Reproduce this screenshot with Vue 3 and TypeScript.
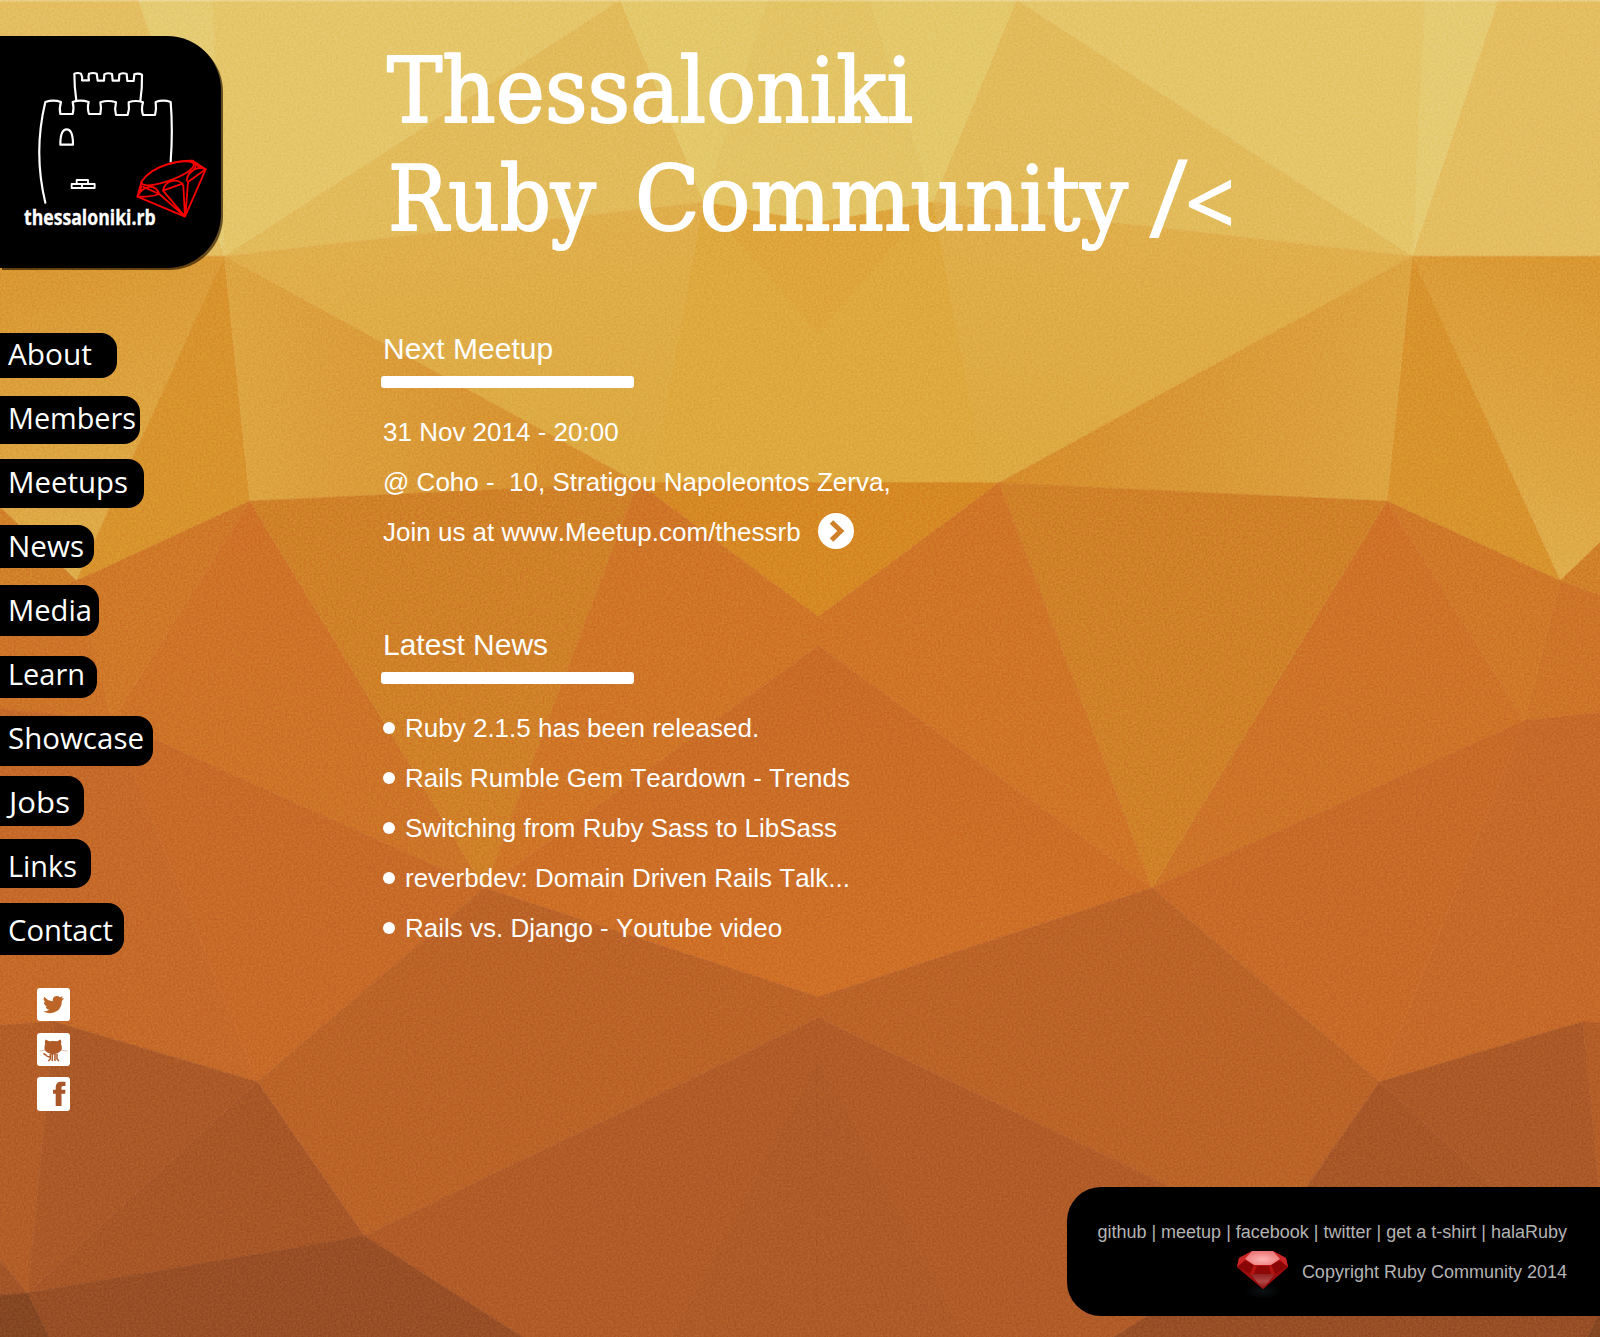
<script setup lang="ts">
interface NavItem {
  label: string
  width: number
  height: number
  gap: number
  textX: number
  textWidth: number
  baseline: number
}

interface Facet {
  points: string
  fill: string
}

interface Shade {
  id: string
  x2: number
  y2: number
  from: string
  to: string
}

const navItems: NavItem[] = [
  { label: 'About', width: 116.5, height: 45, gap: 0, textX: 8, textWidth: 84, baseline: 32 },
  { label: 'Members', width: 140, height: 48, gap: 18, textX: 8, textWidth: 128, baseline: 33 },
  { label: 'Meetups', width: 143.5, height: 49, gap: 15, textX: 8, textWidth: 120, baseline: 34 },
  { label: 'News', width: 94, height: 43, gap: 17, textX: 8, textWidth: 76, baseline: 32 },
  { label: 'Media', width: 98.5, height: 51, gap: 17, textX: 8, textWidth: 84, baseline: 36 },
  { label: 'Learn', width: 97, height: 42, gap: 20, textX: 8, textWidth: 77, baseline: 29 },
  { label: 'Showcase', width: 152.5, height: 50, gap: 18, textX: 8, textWidth: 136, baseline: 33 },
  { label: 'Jobs', width: 83.5, height: 50, gap: 10, textX: 9, textWidth: 61, baseline: 37 },
  { label: 'Links', width: 91, height: 49, gap: 13, textX: 8, textWidth: 69, baseline: 38 },
  { label: 'Contact', width: 124, height: 52, gap: 15, textX: 8, textWidth: 105, baseline: 38 },
]

const news: string[] = [
  'Ruby 2.1.5 has been released.',
  'Rails Rumble Gem Teardown - Trends',
  'Switching from Ruby Sass to LibSass',
  'reverbdev: Domain Driven Rails Talk...',
  'Rails vs. Django - Youtube video',
]

const shades: Shade[] = [
  { id: 'edge', x2: 0.3, y2: 1, from: '#d9952f', to: '#dfac4a' },
  { id: 'wedge', x2: 1, y2: 0, from: '#dda541', to: '#d68c2a' },
  { id: 'drop', x2: 0.3, y2: 1, from: '#e1b04f', to: '#dda940' },
  { id: 'ember', x2: 0, y2: 1, from: '#cf7227', to: '#cc7428' },
  { id: 'rust', x2: 0, y2: 1, from: '#c86b27', to: '#cf7027' },
]

// Facets of the left half; the right half is the same set flipped about x = 802.
const facets: Facet[] = [
  { points: '-40,0 136,0 220,251 -40,251', fill: '#e4be60' },
  { points: '136,0 208,0 220,251', fill: '#e5cb72' },
  { points: '208,0 608,0 220,251', fill: '#e5c669' },
  { points: '608,0 690,198 220,251', fill: '#e2bb5a' },
  { points: '608,0 752,0 690,198', fill: '#e4c86a' },
  { points: '752,0 803,0 803,218 690,198', fill: '#e3c464' },
  { points: '-40,251 220,251 75,569 -40,458', fill: 'url(#edge)' },
  { points: '220,251 245,491 75,569', fill: '#d8932d' },
  { points: '220,251 690,198 803,327 803,473 625,473', fill: 'url(#drop)' },
  { points: '690,198 803,327 803,473 640,473', fill: '#dea93f' },
  { points: '690,198 803,218 803,327', fill: '#dea53b' },
  { points: '220,251 625,473 245,491', fill: 'url(#wedge)' },
  { points: '625,473 803,473 803,605', fill: '#d68824' },
  { points: '-40,458 75,569 -40,610', fill: '#d18029' },
  { points: '-40,610 75,569 110,706 -40,690', fill: '#cd7428' },
  { points: '75,569 245,491 110,706', fill: '#cf7828' },
  { points: '245,491 110,706 475,870', fill: 'url(#ember)' },
  { points: '245,491 625,473 475,870', fill: '#d08028' },
  { points: '625,473 803,605 803,632 475,870', fill: '#cf7527' },
  { points: '803,632 803,977 475,870', fill: 'url(#rust)' },
  { points: '-40,690 110,706 252,1060 53,1001 -40,1007', fill: '#c56929' },
  { points: '110,706 475,870 252,1060', fill: '#c76a28' },
  { points: '475,870 803,977 803,997 357,1211 252,1060', fill: '#bb6328' },
  { points: '803,997 803,1310 512,1310 357,1211', fill: '#b15b28' },
  { points: '803,1040 803,1310 660,1310', fill: '#ae5a28' },
  { points: '-40,1007 53,1001 27,1267 -40,1187', fill: '#b35d28' },
  { points: '53,1001 252,1060 27,1267', fill: '#ab5927' },
  { points: '252,1060 357,1211 27,1267', fill: '#a75627' },
  { points: '-40,1187 27,1267 -40,1272', fill: '#a45528' },
  { points: '27,1267 357,1211 512,1310 48,1310', fill: '#984e25' },
  { points: '-40,1272 27,1267 48,1310 -40,1310', fill: '#854622' },
]
</script>

<template>
  <div class="page">
    <svg class="backdrop" viewBox="0 0 1568 1310" preserveAspectRatio="none" aria-hidden="true">
      <defs>
        <filter id="grain" x="0" y="0" width="100%" height="100%" color-interpolation-filters="sRGB">
          <feTurbulence type="fractalNoise" baseFrequency="0.5" numOctaves="2" seed="4" />
          <feColorMatrix values="1.8 0 0 0 -0.4  1.8 0 0 0 -0.4  1.8 0 0 0 -0.4  0 0 0 0 1" />
        </filter>
        <linearGradient v-for="s in shades" :id="s.id" :key="s.id" x1="0" y1="0" :x2="s.x2" :y2="s.y2">
          <stop offset="0" :stop-color="s.from" />
          <stop offset="1" :stop-color="s.to" />
        </linearGradient>
        <g id="half">
          <polygon
            v-for="(facet, i) in facets"
            :key="i"
            :points="facet.points"
            :fill="facet.fill"
            :stroke="facet.fill"
            stroke-width="0.6"
          />
        </g>
      </defs>
      <use href="#half" />
      <use href="#half" transform="translate(1604 0) scale(-1 1)" />
      <rect class="grain" width="1568" height="1310" filter="url(#grain)" />
      <rect width="1568" height="1.5" fill="#fff" opacity="0.25" />
    </svg>

    <div class="body">
      <aside class="sidebar">
        <a class="logo">
          <svg width="221" height="232" viewBox="0 48 663 696">
            <g fill="none" stroke="#fff" stroke-width="6.500" stroke-linecap="round" stroke-linejoin="round">
              <path d="M136 548C110 440 112 345 136 246Q160 238 183 246Q177 265 181 282H218Q223 265 218 246Q241 238 266 246Q261 265 267 282H301Q305 265 301 247Q325 239 348 247Q343 266 348 285H383Q389 266 386 247Q407 239 429 247Q423 266 429 285H465Q470 266 467 246Q490 238 512 246Q519 330 512 424" />
              <path d="M229 242Q223 200 223 161Q233 157 243 161Q249 172 246 181H267Q264 170 267 161Q280 157 290 161L293 182H312L313 163Q324 157 336 162L338 182H357L358 163Q369 157 380 162L382 183H401L403 163Q415 158 426 164Q427 202 421 243" />
              <path d="M181 374Q181 328 200 328Q219 328 219 374Z" />
              <path d="M215 492H284V504H215ZM230 480H264V492H230ZM246 492V504" stroke-width="5.500" />
            </g>
            <g fill="none" stroke="#f60000" stroke-width="5.500" stroke-linejoin="round">
              <path d="M412 530L425 484Q450 448 505 432Q550 420 578 422L617 448L555 590Z" />
              <path d="M425 484C420 500 450 499 492 487C550 469 590 443 580 430C574 420 535 423 505 432" />
              <path d="M578 422L586 434L617 448M586 434Q590 444 570 460M425 496L418 522M412 530C430 494 466 490 478 522M412 530Q450 532 478 522L555 590M428 500L478 522M555 590L489 512C495 476 540 474 550 497L555 590M489 512L550 490M560 484C562 444 602 440 617 448L564 486L557 580" />
            </g>
            <text class="logo-name" x="72" y="616" textLength="395" lengthAdjust="spacingAndGlyphs">thessaloniki.rb</text>
          </svg>
        </a>

        <nav class="menu">
          <a
            v-for="item in navItems"
            :key="item.label"
            class="pill"
            :style="{ width: item.width + 'px', height: item.height + 'px', marginTop: item.gap + 'px' }"
          >
            <svg :width="item.width" :height="item.height">
              <text :x="item.textX" :y="item.baseline" :textLength="item.textWidth" lengthAdjust="spacingAndGlyphs">{{ item.label }}</text>
            </svg>
          </a>
        </nav>

        <div class="social">
          <a>
            <svg width="33" height="33" viewBox="0 0 33 33">
              <path fill="#bd6528" d="M27 10.2Q26 12 24.800 13Q25 19 20.500 22.800Q14 27.300 6.300 23.500Q10 23.600 12.200 21.700Q9.300 21.200 8.500 18.700H10.200Q6.800 17 6.900 13.900L8.600 14.400Q5.600 11.700 7.200 8.700Q10.800 12.900 15.700 13.200Q15.300 8.600 19.600 8Q21.500 7.900 23 9.200L25.800 8.200L24.700 10.500Z" />
            </svg>
          </a>
          <a>
            <svg width="33" height="33" viewBox="0 0 33 33">
              <path fill="#b05a27" d="M8.500 6.500L12.300 8.300Q16 7.500 20 8.300L23.700 6.500Q24.800 9 24 11Q26.500 16 22.500 19Q20.800 20.300 18.700 20.500V21.500H13.300V20.500Q11.200 20.300 9.600 19Q6 16 8.200 11Q7.400 9 8.500 6.500Z" />
              <path fill="none" stroke="#b05a27" stroke-width="1.500" d="M13.300 21V26L11.300 28M15.300 21V28M18 21V28M20 20.500V26L22 28M13 23.500Q10 24.200 9 22L6.500 20.500" />
              <path stroke="#dcb498" stroke-width="0.800" d="M2.500 18L8 17.300M24.500 17.300L30.500 18" />
            </svg>
          </a>
          <a>
            <svg width="33" height="34" viewBox="0 0 33 34">
              <path fill="#a95728" d="M18.700 29V16.700H16V12.700H18.700V10.500Q18.700 4.800 24 4.800H28.500V9H25.800Q24.500 9 24.500 10.500V12.700H28.500L28.200 16.700H24.500V29Z" />
            </svg>
          </a>
        </div>
      </aside>

      <main class="content">
        <h1 class="title">
          <svg width="860" height="220">
            <text x="5" y="86" textLength="526" lengthAdjust="spacingAndGlyphs">Thessaloniki</text>
            <text x="6" y="194" textLength="208" lengthAdjust="spacingAndGlyphs">Ruby</text>
            <text x="253" y="194" textLength="493" lengthAdjust="spacingAndGlyphs">Community</text>
            <text class="slash" x="766" y="202">/</text>
            <text class="angle" x="803" y="200" textLength="50" lengthAdjust="spacingAndGlyphs">&lt;</text>
          </svg>
        </h1>

        <section class="block">
          <h2>Next Meetup</h2>
          <div class="rule"></div>
          <p>31 Nov 2014 - 20:00</p>
          <p>@ Coho -&nbsp; 10, Stratigou Napoleontos Zerva,</p>
          <p class="join">
            <span>Join us at www.Meetup.com/thessrb</span>
            <svg width="36" height="36" viewBox="0 0 36 36">
              <circle cx="18" cy="18" r="18" fill="#fff" />
              <path d="M13.500 9L22.800 18L13.500 27" fill="none" stroke="#cf7f28" stroke-width="5" />
            </svg>
          </p>
        </section>

        <section class="block latest">
          <h2>Latest News</h2>
          <div class="rule"></div>
          <ul>
            <li v-for="entry in news" :key="entry">{{ entry }}</li>
          </ul>
        </section>
      </main>
    </div>

    <footer class="footer">
      <div class="links">github | meetup | facebook | twitter | get a t-shirt | halaRuby</div>
      <div class="legal">
        <svg width="51" height="48" viewBox="0 0 51 48">
          <defs>
            <radialGradient id="table" cx="0.5" cy="0.6" r="0.6">
              <stop offset="0" stop-color="#ffb5b5" />
              <stop offset="1" stop-color="#ea7474" />
            </radialGradient>
            <linearGradient id="pavilion" x1="0" y1="0" x2="0" y2="1">
              <stop offset="0" stop-color="#8e2020" />
              <stop offset="0.500" stop-color="#b04646" />
              <stop offset="1" stop-color="#8c0c0c" />
            </linearGradient>
            <radialGradient id="glow">
              <stop offset="0" stop-color="#0d1214" />
              <stop offset="1" stop-color="#000" />
            </radialGradient>
          </defs>
          <ellipse cx="26" cy="40" rx="18" ry="8" fill="url(#glow)" />
          <path fill="#a80a0a" d="M15 0H36L49 7L51 16L26 38L0 16L2 7Z" />
          <path fill="#c92626" d="M2 7L15 0L8 9L0 16ZM49 7L36 0L43 9L51 16Z" />
          <path fill="#8a0606" d="M8 10L0 16L13 23L17 14ZM43 10L51 16L38 23L34 14Z" />
          <path fill="#b51212" d="M17 14H34L38 23H13Z" />
          <path fill="#8f0808" d="M20 15H32L34 23H17Z" />
          <path fill="url(#pavilion)" d="M13 23H38L26 38Z" />
          <path fill="#9c0d0d" d="M0 16L13 23L26 38ZM51 16L38 23L26 38Z" />
          <path fill="url(#table)" d="M15 0H36L43 8L34 14H17L8 8Z" />
        </svg>
        <span>Copyright Ruby Community 2014</span>
      </div>
    </footer>
  </div>
</template>

<style>
body {
  margin: 0;
}
</style>

<style scoped>
.page {
  position: relative;
  isolation: isolate;
  display: flex;
  flex-direction: column;
  width: 1600px;
  height: 1337px;
  overflow: hidden;
  color: #fff;
  font-family: "Liberation Sans", Arial, sans-serif;
  font-kerning: none;
}

.backdrop {
  position: absolute;
  inset: 0;
  z-index: -1;
  width: 100%;
  height: 100%;
  isolation: isolate;
}

.grain {
  opacity: 0.1;
  mix-blend-mode: overlay;
}

.body {
  display: flex;
  align-items: flex-start;
}

.sidebar {
  display: flex;
  flex-direction: column;
  align-items: flex-start;
  width: 382px;
  padding-top: 36px;
}

.logo {
  display: flex;
  width: 221px;
  height: 232px;
  border-radius: 0 54px 54px 0;
  background: #000;
  box-shadow: 2px 2px 0 rgba(50, 28, 0, 0.7);
}

.logo-name {
  fill: #fff;
  stroke: #fff;
  stroke-width: 1px;
  font: 700 64px "Open Sans", "Noto Sans", sans-serif;
}

.menu {
  display: flex;
  flex-direction: column;
  align-items: flex-start;
  margin-top: 65px;
}

.pill {
  display: flex;
  border-radius: 0 16px 16px 0;
  background: #000;
}

.pill svg {
  overflow: visible;
}

.pill text {
  fill: #fff;
  font: 400 29px "Open Sans", "Noto Sans", sans-serif;
}

.social {
  display: flex;
  flex-direction: column;
  gap: 12px;
  margin: 33px 0 0 37px;
}

.social a {
  display: flex;
  border-radius: 3px;
  background: #fff;
}

.social a:last-child {
  margin-top: -1px;
}

.content {
  display: flex;
  flex-direction: column;
  padding-top: 36px;
}

.title {
  display: flex;
  height: 220px;
  margin: 0;
}

.title svg {
  overflow: visible;
}

.title text {
  fill: #fff;
  stroke: #fff;
  stroke-width: 2px;
  stroke-linejoin: round;
  font: 400 89px "DejaVu Serif", serif;
}

.title .slash {
  stroke: none;
  font: 400 110px "Noto Sans", sans-serif;
}

.title .angle {
  stroke-width: 1px;
  font: 400 92px "Noto Sans", sans-serif;
}

.block {
  display: flex;
  flex-direction: column;
  margin-top: 76px;
}

.latest {
  margin-top: 71px;
}

h2 {
  height: 34px;
  margin: 0 0 10px 1px;
  font-size: 30px;
  font-weight: 400;
  line-height: 34px;
}

.rule {
  width: 253px;
  height: 12px;
  margin: 0 0 19px -1px;
  border-radius: 3px;
  background: #fff;
}

p,
li {
  display: flex;
  align-items: center;
  height: 50px;
  margin: 0 0 0 1px;
  font-size: 26px;
  line-height: 50px;
  white-space: pre;
}

.join {
  gap: 17px;
}

.join svg {
  margin-top: -3px;
}

ul {
  margin: 0;
  padding: 0;
  list-style: none;
}

li::before {
  width: 12px;
  height: 12px;
  margin-right: 10px;
  border-radius: 50%;
  background: #fff;
  content: "";
}

.footer {
  display: flex;
  flex-direction: column;
  align-items: flex-end;
  align-self: flex-end;
  box-sizing: border-box;
  width: 533px;
  height: 129px;
  margin: auto 0 21px;
  padding: 33px 33px 0 0;
  border-radius: 34px 0 0 34px;
  background: #000;
  color: #b4b4b4;
  font-size: 18px;
  line-height: 24px;
}

.links,
.legal {
  white-space: nowrap;
}

.legal {
  display: flex;
  align-items: flex-start;
  gap: 14px;
  margin-top: 7px;
}

.legal span {
  margin-top: 9px;
}
</style>
